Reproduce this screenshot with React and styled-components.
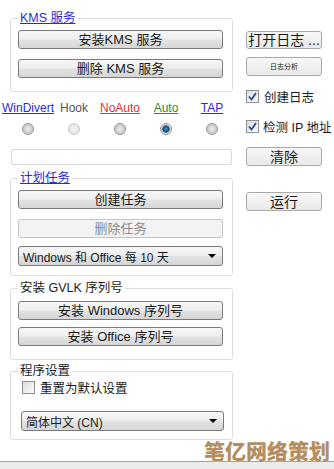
import styled, { createGlobalStyle } from "styled-components";

const GlobalStyle = createGlobalStyle`
  html, body {
    margin: 0;
    background: #ffffff;
    font-family: "Liberation Sans", "Noto Sans CJK SC", sans-serif;
    font-size: 12px;
    color: #1a1a1a;
  }
`;

const Page = styled.div`
  position: relative;
  height: 469px;
  display: flex;
  flex-direction: column;
  overflow: hidden;
`;

const Main = styled.div`
  flex: 1;
  display: flex;
`;

const LeftColumn = styled.div`
  width: 233px;
  display: flex;
  flex-direction: column;
`;

const RightColumn = styled.div`
  width: 76px;
  margin-left: 13px;
  padding-top: 31px;
  display: flex;
  flex-direction: column;
`;

const Group = styled.fieldset`
  box-sizing: border-box;
  width: 223px;
  margin: ${(p) => p.$top}px 0 0 10px;
  padding: ${(p) => p.$pt}px 9px ${(p) => p.$pb}px 7px;
  border: 1px solid #dddddd;
  border-radius: 3px;
  min-width: 0;
`;

const Legend = styled.legend`
  padding: 0 2px;
  line-height: 14px;
  font-size: 12.5px;
  color: ${(p) => (p.$link ? "#2b2bd4" : "#1a1a1a")};
  text-decoration: ${(p) => (p.$link ? "underline" : "none")};
`;

const Button = styled.button`
  display: flex;
  align-items: center;
  justify-content: center;
  box-sizing: border-box;
  width: ${(p) => p.$w || "100%"};
  height: ${(p) => p.$h || 19}px;
  margin: ${(p) => p.$mt || 0}px 0 0 0;
  padding: 0;
  border: 1px solid ${(p) => (p.disabled ? "#c4c4c4" : p.$soft ? "#a9a9a9" : "#7a7a7a")};
  border-radius: 3px;
  background: ${(p) =>
    p.disabled
      ? "#f3f3f3"
      : p.$soft
      ? "linear-gradient(#f7f7f7, #e9e9e9)"
      : "linear-gradient(#f7f7f7 0%, #eeeeee 48%, #e2e2e2 52%, #d6d6d6 100%)"};
  color: ${(p) => (p.disabled ? "#8c8c8c" : "#1a1a1a")};
  font-family: "Liberation Sans", "Noto Sans CJK SC", sans-serif;
  font-size: ${(p) => p.$fs || 13}px;
  line-height: 1;
`;

const RadioRow = styled.div`
  display: grid;
  grid-template-columns: repeat(5, 46px);
  margin: 10px 0 0 5px;
`;

const RadioItem = styled.div`
  display: flex;
  flex-direction: column;
  align-items: center;
  gap: 9px;
  white-space: nowrap;
`;

const RadioLabel = styled.span`
  line-height: 12px;
  font-size: 12px;
  color: ${(p) => p.$color};
  text-decoration: ${(p) => (p.$link ? "underline" : "none")};
`;

const Radio = styled.span`
  box-sizing: border-box;
  width: 12px;
  height: 12px;
  border-radius: 50%;
  border: 1px solid ${(p) => (p.$disabled ? "#c8c8c8" : "#8e8f8f")};
  background: ${(p) =>
    p.$checked
      ? "radial-gradient(circle, #5aa0d0 0, #1d4f78 2.5px, #2f6c99 3.5px, #dcdcdc 4px, #f4f4f4 6px)"
      : p.$disabled
      ? "radial-gradient(circle, #f2f2f2 0, #e4e4e4 5px)"
      : "radial-gradient(circle, #f0f0f0 0, #d6d6d6 3px, #c8c8c8 4px, #ececec 6px)"};
`;

const TextBox = styled.div`
  box-sizing: border-box;
  width: 221px;
  height: 16px;
  margin: 14px 0 0 11px;
  border: 1px solid #d9d9d9;
  border-radius: 2px;
  background: #ffffff;
`;

const Select = styled.div`
  box-sizing: border-box;
  display: flex;
  align-items: center;
  justify-content: space-between;
  width: ${(p) => p.$w || "100%"};
  height: 20px;
  margin: ${(p) => p.$mt || 0}px 0 0 ${(p) => p.$ml || 0}px;
  padding: 0 6px 0 4px;
  border: 1px solid #7a7a7a;
  border-radius: 3px;
  background: linear-gradient(#f7f7f7 0%, #eeeeee 48%, #e2e2e2 52%, #d6d6d6 100%);
  font-size: 12px;
  white-space: nowrap;
`;

const Arrow = styled.span`
  width: 0;
  height: 0;
  border-left: 4px solid transparent;
  border-right: 4px solid transparent;
  border-top: 4px solid #000;
`;

const CheckRow = styled.label`
  display: flex;
  align-items: center;
  gap: ${(p) => p.$gap || 5}px;
  height: 15px;
  margin: ${(p) => p.$mt || 0}px 0 0 ${(p) => p.$ml || 0}px;
  font-size: 12.5px;
  white-space: nowrap;
`;

const CheckBox = styled.span`
  box-sizing: border-box;
  flex: none;
  width: 13px;
  height: 13px;
  border: 1px solid #8e8f8f;
  background: linear-gradient(135deg, #dcdcdc, #fbfbfb);
  display: flex;
  align-items: center;
  justify-content: center;
`;

const StatusBar = styled.div`
  height: 7px;
  border-top: 1px solid #a0a0a0;
  background: #ececec;
`;

const Watermark = styled.div`
  position: absolute;
  right: 4px;
  bottom: 7px;
  font-family: "Noto Sans CJK SC", sans-serif;
  font-weight: 900;
  font-size: 21px;
  line-height: 24px;
  color: #b48e60;
  text-shadow: 0 0 1px #fff;
`;

const Check = () => (
  <svg width="9" height="9" viewBox="0 0 9 9">
    <path d="M1 4.5 L3.5 7.5 L8 1" fill="none" stroke="#2a4b9b" strokeWidth="1.8" />
  </svg>
);

const radios = [
  { label: "WinDivert", color: "#2b2bd4", link: true },
  { label: "Hook", color: "#555555", disabled: true },
  { label: "NoAuto", color: "#e23030", link: true },
  { label: "Auto", color: "#2e8b2e", link: true, checked: true },
  { label: "TAP", color: "#2b2bd4", link: true },
];

export default function App() {
  return (
    <Page>
      <GlobalStyle />
      <Main>
        <LeftColumn>
          <Group $top={11} $pt={5} $pb={13}>
            <Legend $link>KMS 服务</Legend>
            <Button>安装KMS 服务</Button>
            <Button $mt={10}>删除 KMS 服务</Button>
          </Group>

          <RadioRow>
            {radios.map((r) => (
              <RadioItem key={r.label}>
                <RadioLabel $color={r.color} $link={r.link}>
                  {r.label}
                </RadioLabel>
                <Radio $checked={r.checked} $disabled={r.disabled} />
              </RadioItem>
            ))}
          </RadioRow>

          <TextBox />

          <Group $top={6} $pt={5} $pb={9}>
            <Legend $link>计划任务</Legend>
            <Button>创建任务</Button>
            <Button $mt={10} disabled>
              删除任务
            </Button>
            <Select $mt={8}>
              <span>Windows 和 Office 每 10 天</span>
              <Arrow />
            </Select>
          </Group>

          <Group $top={5} $pt={6} $pb={13}>
            <Legend>安装 GVLK 序列号</Legend>
            <Button>安装 Windows 序列号</Button>
            <Button $mt={7}>安装 Office 序列号</Button>
          </Group>

          <Group $top={4} $pt={2} $pb={8}>
            <Legend>程序设置</Legend>
            <CheckRow $ml={4}>
              <CheckBox />
              重置为默认设置
            </CheckRow>
            <Select $mt={16} $ml={3} $w="203px">
              <span>简体中文 (CN)</span>
              <Arrow />
            </Select>
          </Group>
        </LeftColumn>

        <RightColumn>
          <Button $soft $h={18} $fs={14}>
            打开日志 ...
          </Button>
          <Button $soft $h={19} $fs={7} $mt={8}>
            日志分析
          </Button>
          <CheckRow $mt={13}>
            <CheckBox>
              <Check />
            </CheckBox>
            创建日志
          </CheckRow>
          <CheckRow $mt={15} $gap={4}>
            <CheckBox>
              <Check />
            </CheckBox>
            检测 IP 地址
          </CheckRow>
          <Button $soft $mt={13} $fs={14}>
            清除
          </Button>
          <Button $soft $mt={26} $fs={14}>
            运行
          </Button>
        </RightColumn>
      </Main>
      <StatusBar />
      <Watermark>笔亿网络策划</Watermark>
    </Page>
  );
}
